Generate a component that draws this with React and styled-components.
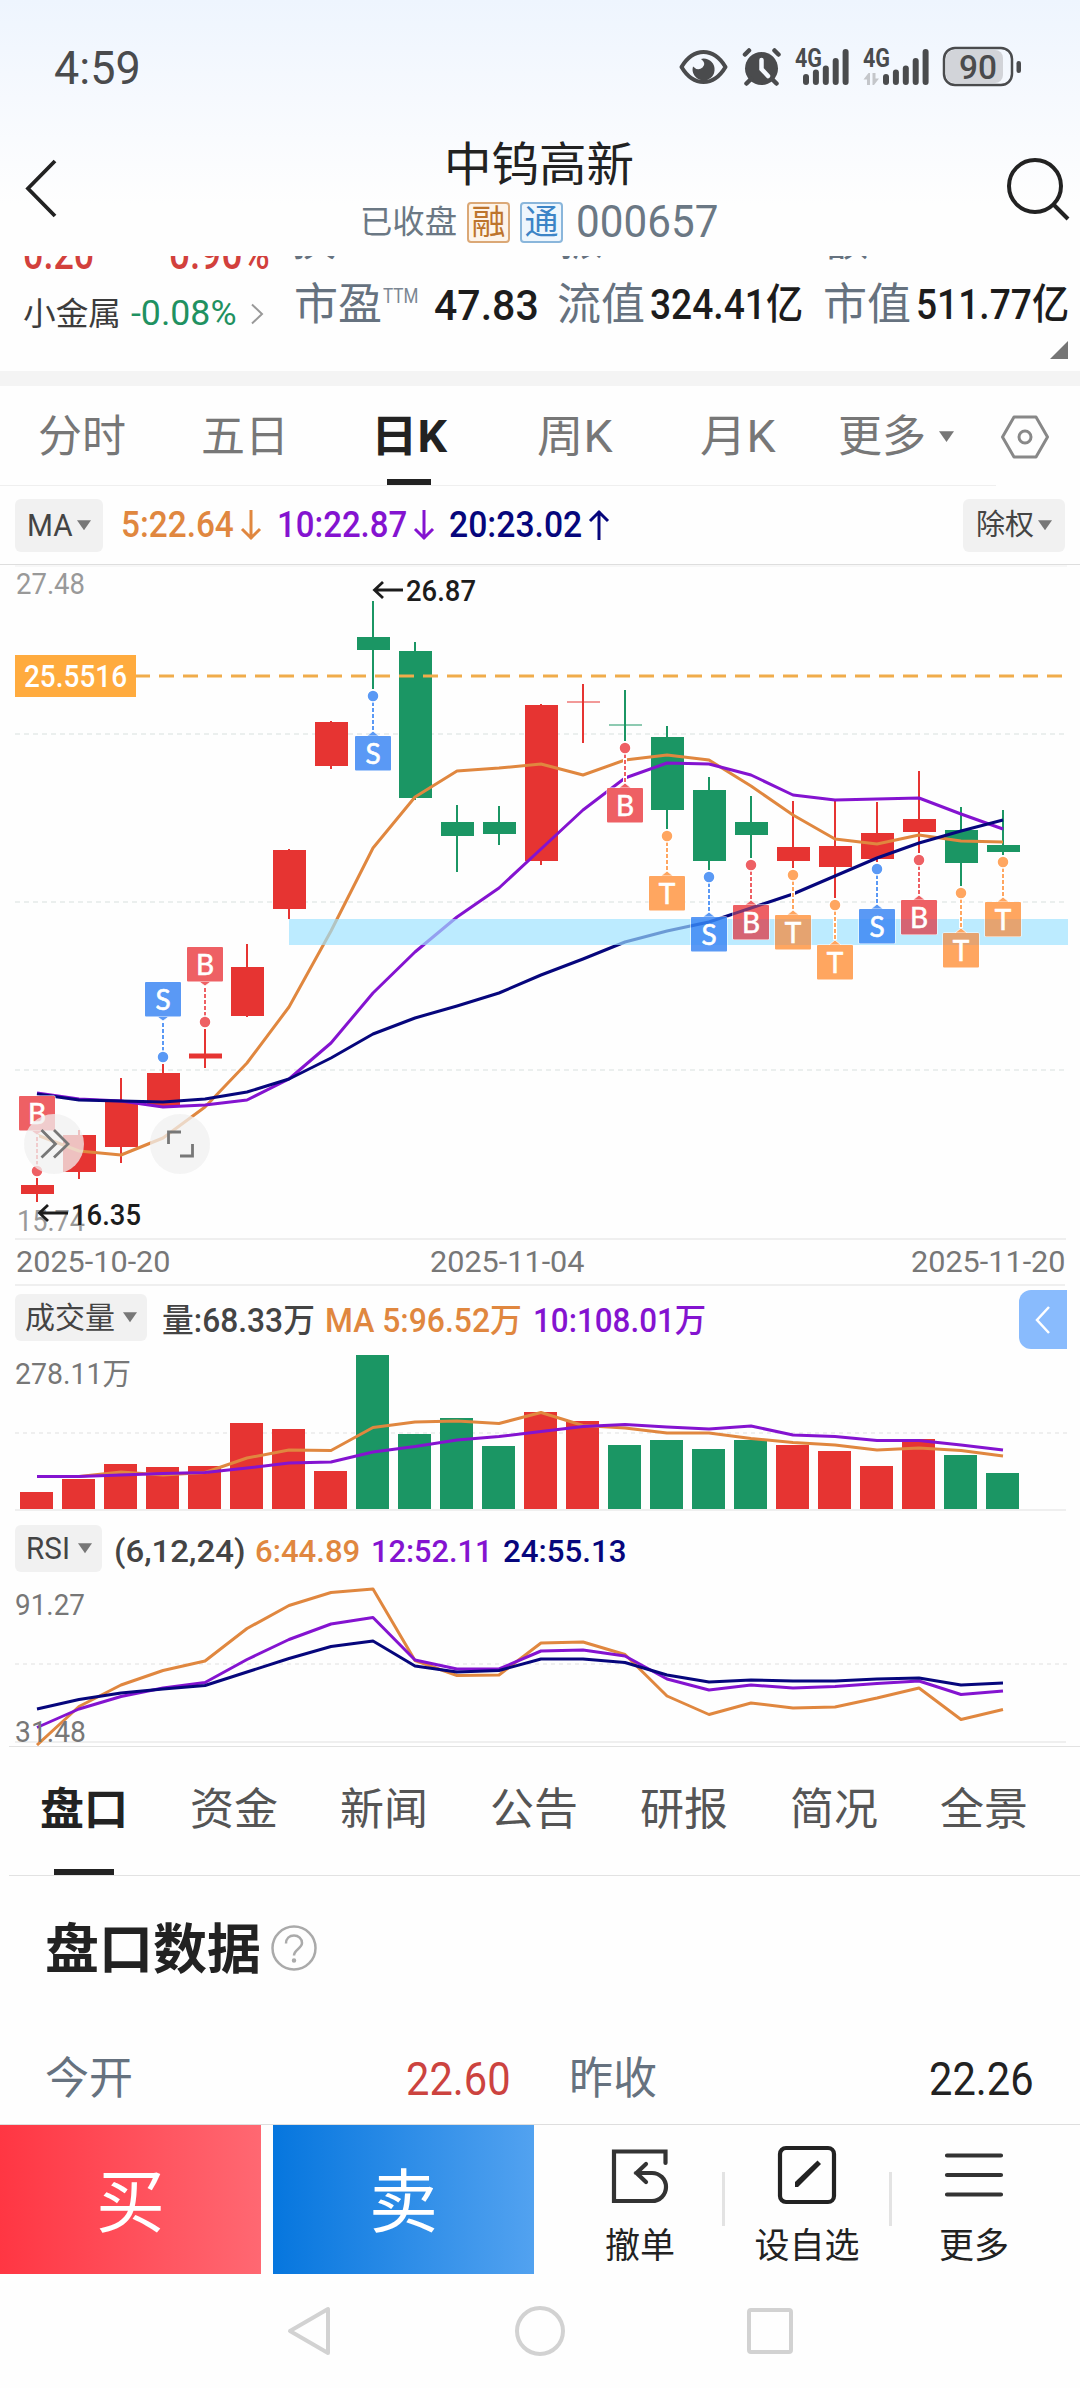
import { useLayoutEffect, useRef, useState } from "react";
import styled, { createGlobalStyle } from "styled-components";

const RED = "#e63432";
const GREEN = "#1b9664";
const ORANGE = "#e0873f";
const PURPLE = "#8413d0";
const NAVY = "#06067c";
const FONT = `Roboto, "Noto Sans CJK SC", sans-serif`;

const TAG_COLORS = { B: "#ee6064", S: "#5a99f5", T: "#ffa660" };

// [up, high, top, bottom, low]
const candles = [
  [1, 1178, 1185, 1194, 1202],
  [1, 1130, 1135, 1172, 1179],
  [1, 1078, 1101, 1147, 1163],
  [1, 1064, 1073, 1106, 1106],
  [1, 1029, 1053.5, 1058.5, 1068],
  [1, 944, 967, 1016, 1017],
  [1, 849, 850, 909, 919],
  [1, 721, 722, 766, 769],
  [0, 601, 637, 650, 689],
  [0, 642, 651, 798, 800],
  [0, 805, 822, 836, 872],
  [0, 806, 822, 834, 845],
  [1, 704, 705, 861, 865],
  [1, 684, 702, 702, 743],
  [0, 690, 725, 725, 741],
  [0, 726, 737, 810, 829],
  [0, 777, 790, 861, 870],
  [0, 796, 822, 835, 858],
  [1, 801, 847, 861, 868],
  [1, 800, 846, 867, 898],
  [1, 802, 833, 859, 862],
  [1, 771, 819, 832, 853],
  [0, 807, 830, 863, 886],
  [0, 810, 845, 852, 855],
];

const ma5 = [1135, 1151, 1155, 1138, 1107, 1063, 1007, 931, 848, 797, 771, 768, 764, 775, 760, 755, 760, 786, 815, 839, 844, 835, 841, 842];
const ma10 = [1093, 1099, 1101, 1107, 1105, 1100, 1079, 1043, 993, 952, 917, 888, 849, 810, 778, 763, 764, 775, 795, 800, 799, 798, 814, 829];
const ma20 = [1094, 1100, 1101, 1102, 1099, 1092, 1079, 1058, 1034, 1018, 1006, 993, 975, 959, 942, 931, 922, 908, 894, 876, 858, 843, 831, 820];

// [index, letter, dot y, box top]
const tags = [
  [0, "B", 1171, 1096],
  [3, "S", 1057, 982],
  [4, "B", 1022, 947],
  [8, "S", 696, 736],
  [14, "B", 748, 788],
  [15, "T", 836, 876],
  [16, "S", 877, 917],
  [17, "B", 865, 905],
  [18, "T", 875, 915],
  [19, "T", 905, 945],
  [20, "S", 869, 909],
  [21, "B", 860, 900],
  [22, "T", 893, 933],
  [23, "T", 862, 902],
];

const volTop = [1492, 1479, 1464, 1467, 1466, 1423, 1429, 1471, 1355, 1434, 1418, 1446, 1412, 1421, 1445, 1440, 1449, 1440, 1445, 1451, 1466, 1439, 1455, 1473];
const volUp = [1, 1, 1, 1, 1, 1, 1, 1, 0, 0, 0, 0, 1, 1, 0, 0, 0, 0, 1, 1, 1, 1, 0, 0];
const volMa5 = [1476.5, 1476.5, 1472, 1475, 1472.5, 1458, 1450, 1450.5, 1427.5, 1422, 1421, 1423.5, 1412.5, 1425.5, 1428, 1433, 1433, 1438.5, 1442.5, 1445, 1450, 1448, 1450.5, 1456];
const volMa10 = [1476.5, 1476.5, 1475, 1473.5, 1472.5, 1468, 1463, 1462, 1452, 1446.5, 1440, 1436.5, 1431.5, 1426.5, 1424.5, 1427, 1429, 1426, 1435, 1436.5, 1440.5, 1440.5, 1445, 1450];

const rsi6 = [1745, 1706.5, 1685, 1670.5, 1661, 1628.5, 1605.5, 1592.5, 1589, 1660.5, 1675.5, 1675, 1643, 1642, 1654.5, 1696, 1714.5, 1703, 1708, 1707, 1698, 1688, 1719.5, 1709.5];
const rsi12 = [1727.5, 1709, 1696.5, 1688, 1682.5, 1659.5, 1639.5, 1624, 1617.5, 1660, 1669, 1669, 1651, 1650, 1656, 1679, 1690, 1685, 1688, 1686.5, 1683.5, 1681, 1694.5, 1691];
const rsi24 = [1709, 1699.5, 1693, 1689, 1685.5, 1672, 1658.5, 1646.5, 1641, 1666, 1672, 1670.5, 1659, 1659, 1662.5, 1675, 1682, 1680, 1681, 1681, 1679, 1678, 1685, 1683];

const cx = (i) => 37 + i * 42;
const points = (ys) => ys.map((y, i) => `${cx(i)},${y}`).join(" ");

// Squeezes a run of text into a given width, like the narrow DIN digits
function Fit({ w, children, ...rest }) {
  const ref = useRef(null);
  const [scale, setScale] = useState(1);

  useLayoutEffect(() => {
    setScale(w / ref.current.offsetWidth);
  }, [w]);

  return (
    <FitBox $w={w} {...rest}>
      <FitText ref={ref} style={{ transform: `scaleX(${scale})` }}>{children}</FitText>
    </FitBox>
  );
}

function Caret({ size = 14 }) {
  return (
    <svg width={size} height={size * 0.75} viewBox="0 0 14 10">
      <path d="M0 0h14L7 10z" fill="#777" />
    </svg>
  );
}

function TrendArrow({ color, up }) {
  return (
    <svg width="22" height="32" viewBox="0 0 22 32" fill="none" stroke={color} strokeWidth="3">
      {up ? <path d="M11 31V2M2 12l9-9 9 9" /> : <path d="M11 1v29M2 20l9 9 9-9" />}
    </svg>
  );
}

function Label({ x, y, w, color = "#999", weight = 400, size = 30, children }) {
  return (
    <text x={x} y={y} textLength={w} lengthAdjust="spacingAndGlyphs" fontFamily={FONT} fontSize={size} fontWeight={weight} fill={color}>
      {children}
    </text>
  );
}

function Line({ ys, color, ...rest }) {
  return <polyline points={points(ys)} fill="none" stroke={color} strokeWidth="3" strokeLinejoin="round" {...rest} />;
}

function Tag({ i, letter, dot, top }) {
  const x = cx(i);
  const color = TAG_COLORS[letter];
  const below = top > dot;
  const tip = below ? top - 5 : top + 39;
  const edge = below ? top : top + 34.5;
  const shadeTop = Math.max(top, 919);
  const shadeBottom = Math.min(top + 34.5, 945);
  return (
    <g>
      <line x1={x} x2={x} y1={dot} y2={tip} stroke="#fff" strokeWidth="4" />
      <line x1={x} x2={x} y1={dot} y2={tip} stroke={color} strokeWidth="2" strokeDasharray="4 2" />
      <circle cx={x} cy={dot} r="6" fill={color} stroke="#fff" strokeWidth="1.5" />
      <rect x={x - 18.5} y={top - 0.5} width="37" height="35.5" rx="1.5" fill="#fff" />
      <path d={`M${x - 6} ${edge}L${x} ${tip}L${x + 6} ${edge}z`} fill={color} stroke="#fff" strokeWidth=".8" />
      <rect x={x - 18} y={top} width="36" height="34.5" rx="1" fill={color} />
      {i > 6 && shadeBottom > shadeTop && (
        <rect x={x - 18} y={shadeTop} width="36" height={shadeBottom - shadeTop} fill="#008cff" opacity=".1" />
      )}
      {(i === 16 || i === 17) && <Line ys={ma20} color={letter === "S" ? "#0a50d0" : NAVY} opacity=".5" clipPath={`url(#tag${i})`} />}
      <text x={x} y={top + 27.5} textAnchor="middle" fontFamily="Lato, sans-serif" fontSize="28" fill="#fff" stroke="#fff" strokeWidth=".6">
        {letter}
      </text>
    </g>
  );
}

function StatusIcons() {
  const heights = [11, 15.5, 19.5, 27, 36];
  return (
    <svg width="346" height="44" viewBox="678 45 346 44">
      <path d="M681.500 67q9-15 22-15t22 15q-9 15-22 15t-22-15z" fill="none" stroke="#4a4b4d" strokeWidth="4" strokeLinejoin="round" />
      <path d="M703.500 58.500a11 11 0 1 1-10.500 8q5 5 9.500 1t-1.500-8.500z" fill="#4a4b4d" />
      <circle cx="761.500" cy="68.500" r="16.500" fill="#4a4b4d" />
      <path d="M745 54.500l4-4M778.500 54.500l-4-4M751 79l-4.500 4.500M772 79l4.500 4.500" stroke="#4a4b4d" strokeWidth="4.500" strokeLinecap="round" />
      <path d="M761.500 60v9l6.500 7" fill="none" stroke="#f4f8fe" strokeWidth="4.500" strokeLinecap="round" />
      {[803, 883].map((x) => (
        <g key={x} fill="#4a4b4d">
          {heights.map((h, k) => (
            <rect key={k} x={x + k * 9.9} y={85 - h} width="6" height={h} rx="3" />
          ))}
        </g>
      ))}
      <Label x={795} y={66.500} w={27} size={25} weight={700} color="#4a4b4d">4G</Label>
      <Label x={863} y={66.500} w={27} size={25} weight={700} color="#4a4b4d">4G</Label>
      <path d="M863.500 79.500l5-6.500h1.500v12h-3v-5.500zM879 78.500l-5 6.500h-1.500v-12h3v5.500z" fill="#c4c6ca" />
      <rect x="946" y="50" width="57" height="33" rx="8" fill="#d2d4d9" />
      <rect x="944" y="48" width="68" height="37" rx="11" fill="none" stroke="#4a4b4d" strokeWidth="2.500" />
      <rect x="1016.500" y="61" width="4.500" height="12" rx="2.200" fill="#4a4b4d" />
      <Label x={959} y={79} w={38} size={34} weight={500} color="#4a4b4d">90</Label>
    </svg>
  );
}

function PriceChart() {
  return (
    <Plot height="675" viewBox="0 565 1080 675">
      <defs>
        <clipPath id="tag16"><rect x={cx(16) - 18} y="917" width="36" height="34" /></clipPath>
        <clipPath id="tag17"><rect x={cx(17) - 18} y="905" width="36" height="34" /></clipPath>
      </defs>
      {[734, 902, 1070].map((y) => (
        <line key={y} x1="15" x2="1067" y1={y} y2={y} stroke="#ebefee" strokeWidth="2" strokeDasharray="5 4" />
      ))}
      <line x1="15" x2="1067" y1="566" y2="566" stroke="#f0f0f0" />
      <Label x={16} y={594} w={69}>27.48</Label>
      <Label x={17} y={1231} w={68}>15.74</Label>

      {candles.map(([up, high, top, bottom, low], i) => {
        const color = up ? RED : GREEN;
        return (
          <g key={i} fill={color}>
            <rect x={cx(i) - 1} y={high} width="2" height={low - high} />
            {bottom > top ? (
              <rect x={cx(i) - 16} y={top} width="33" height={bottom - top} />
            ) : (
              <rect x={cx(i) - 16} y={top - 1} width="33" height="2" opacity=".5" />
            )}
          </g>
        );
      })}

      <line x1="135" x2="1067" y1="676" y2="676" stroke="#f0ac4b" strokeWidth="3" strokeDasharray="15 9" />
      <rect x="15" y="655" width="121" height="42" fill="#ffab3e" />
      <Label x={24} y={687} w={103} size={31} weight={500} color="#fff">25.5516</Label>

      <Line ys={ma5} color={ORANGE} />
      <Line ys={ma10} color={PURPLE} />
      <Line ys={ma20} color={NAVY} />
      <rect x="289" y="919" width="779" height="26" fill="#9ce2ff" opacity=".68" />

      {tags.map(([i, letter, dot, top]) => (
        <Tag key={i} i={i} letter={letter} dot={dot} top={top} />
      ))}

      <path d="M403 590h-28M383 582l-8.500 8 8.500 8" fill="none" stroke="#1c1c1c" strokeWidth="2.800" />
      <Label x={406} y={601} w={70} weight={500} color="#1c1c1c">26.87</Label>
      <path d="M68 1213H40M48 1205l-8.500 8 8.500 8" fill="none" stroke="#1c1c1c" strokeWidth="2.800" />
      <Label x={71} y={1225} w={70} weight={500} color="#1c1c1c">16.35</Label>

      <g fill="none" stroke="#777" strokeWidth="2.800">
        <circle cx="54" cy="1144" r="30" fill="#f0f0f0" fillOpacity=".75" stroke="none" />
        <path d="M41.500 1130l14 14-14 13.500M54 1130l14 14-14 13.500" />
        <circle cx="180" cy="1144" r="30" fill="#f0f0f0" fillOpacity=".75" stroke="none" />
        <path d="M168.500 1144v-12H181M192.500 1144v12H180" />
      </g>
      <line x1="15" x2="1066" y1="1239" y2="1239" stroke="#efefef" strokeWidth="2" />
    </Plot>
  );
}

function VolumeChart() {
  return (
    <Plot height="162" viewBox="0 1350 1080 162">
      <line x1="15" x2="1067" y1="1433" y2="1433" stroke="#efefef" strokeWidth="2" strokeDasharray="4 4" />
      <line x1="15" x2="1066" y1="1510" y2="1510" stroke="#efefef" strokeWidth="2" />
      <Label x={15} y={1384} w={116} color="#777">278.11万</Label>
      {volTop.map((y, i) => (
        <rect key={i} x={cx(i) - 17} y={y} width="33" height={1509 - y} fill={volUp[i] ? RED : GREEN} />
      ))}
      <Line ys={volMa5} color={ORANGE} />
      <Line ys={volMa10} color={PURPLE} />
    </Plot>
  );
}

function RsiChart() {
  return (
    <Plot height="166" viewBox="0 1580 1080 166">
      <line x1="15" x2="1067" y1="1664" y2="1664" stroke="#efefef" strokeWidth="2" strokeDasharray="4 4" />
      <line x1="15" x2="1066" y1="1742" y2="1742" stroke="#efefef" strokeWidth="2" />
      <Line ys={rsi6} color={ORANGE} />
      <Line ys={rsi12} color={PURPLE} />
      <Line ys={rsi24} color={NAVY} />
      <Label x={15} y={1615} w={70} color="#777">91.27</Label>
      <Label x={15} y={1742} w={71} color="#777">31.48</Label>
    </Plot>
  );
}

const newsTabs = ["盘口", "资金", "新闻", "公告", "研报", "简况", "全景"];

function App() {
  return (
    <Page>
      <GlobalStyle />
      <Header>
        <StatusBar>
          <Fit w={87} $size={47} $color="#4a4b4d">4:59</Fit>
          <StatusIcons />
        </StatusBar>
        <NavRow>
          <svg width="34" height="60" viewBox="0 0 34 60" fill="none" stroke="#222" strokeWidth="3.800">
            <path d="M31 3L4 30.500 31 58" />
          </svg>
          <TitleBlock>
            <Fit w={190} $size={47} $color="#222">中钨高新</Fit>
            <SubTitle>
              <Fit w={97} $size={32} $color="#6b7884">已收盘</Fit>
              <Badge $border="#dba876" $bg="#fdf4ea" $color="#bd742c">融</Badge>
              <Badge $border="#8ab6db" $bg="#eef6fd" $color="#3c84c6">通</Badge>
              <Code><Fit w={142} $size={44} $color="#6b7884">000657</Fit></Code>
            </SubTitle>
          </TitleBlock>
          <svg width="64" height="64" viewBox="0 0 64 64" fill="none" stroke="#222" strokeWidth="4">
            <circle cx="29" cy="28" r="26" />
            <path d="M48 47l14 14" />
          </svg>
        </NavRow>
      </Header>

      <Stats>
        <ClippedRow>
          <Fit w={71} $size={44} $weight={500} $color="#d2403c">0.20</Fit>
          <Fit w={101} $ml={75} $size={44} $weight={500} $color="#d2403c">0.90%</Fit>
          <ClippedLabel $ml={22}>换</ClippedLabel>
          <ClippedLabel $ml={223}>振</ClippedLabel>
          <ClippedLabel $ml={221}>额</ClippedLabel>
        </ClippedRow>
        <StatsRow>
          <Sector>
            <Fit w={98} $size={32} $color="#3c3c3c">小金属</Fit>
            <Fit w={106} $ml={10} $size={35} $color="#1f9161">-0.08%</Fit>
            <svg width="16" height="24" viewBox="0 0 16 24" fill="none" stroke="#999" strokeWidth="2">
              <path d="M3 2.500l10 9.500L3 21.500" />
            </svg>
          </Sector>
          <Fit w={88} $size={44} $color="#66727f">市盈</Fit>
          <Sup><Fit w={35} $size={20} $color="#7b8692">TTM</Fit></Sup>
          <Fit w={105} $ml={16} $size={43} $weight={500} $color="#1c1c1c">47.83</Fit>
          <Fit w={88} $ml={18} $size={44} $color="#66727f">流值</Fit>
          <Fit w={153} $ml={5} $size={42} $weight={500} $color="#1c1c1c">324.41亿</Fit>
          <Fit w={88} $ml={20} $size={44} $color="#66727f">市值</Fit>
          <Fit w={153} $ml={5} $size={42} $weight={500} $color="#1c1c1c">511.77亿</Fit>
        </StatsRow>
        <Corner />
      </Stats>
      <Band />

      <PeriodTabs>
        <Fit w={88} $size={44} $color="#777">分时</Fit>
        <Fit w={88} $ml={75} $size={44} $color="#777">五日</Fit>
        <ActivePeriod>
          <Fit w={76} $size={44} $weight={700} $color="#222">日K</Fit>
        </ActivePeriod>
        <Fit w={76} $ml={90} $size={44} $color="#777">周K</Fit>
        <Fit w={76} $ml={87} $size={44} $color="#777">月K</Fit>
        <Fit w={88} $ml={62} $size={44} $color="#777">更多</Fit>
        <PeriodCaret><Caret size={15} /></PeriodCaret>
        <svg width="48" height="44" viewBox="0 0 48 44" fill="none" stroke="#888" strokeWidth="3">
          <path d="M13 2h22l11.500 20L35 42H13L1.500 22z" strokeLinejoin="round" />
          <circle cx="24" cy="22" r="6" />
        </svg>
      </PeriodTabs>

      <MaRow>
        <Pill $w={88} $h={53}>
          <Fit w={46} $size={31} $color="#444">MA</Fit>
          <Caret />
        </Pill>
        <Fit w={113} $ml={18} $size={36} $weight={500} $color={ORANGE}>5:22.64</Fit>
        <ArrowCell><TrendArrow color={ORANGE} /></ArrowCell>
        <Fit w={130} $ml={15} $size={36} $weight={500} $color={PURPLE}>10:22.87</Fit>
        <ArrowCell><TrendArrow color={PURPLE} /></ArrowCell>
        <Fit w={133} $ml={14} $size={36} $weight={500} $color={NAVY}>20:23.02</Fit>
        <ArrowCell><TrendArrow color={NAVY} up /></ArrowCell>
        <PillEnd>
          <Pill $w={102} $h={53}>
            <Fit w={58} $size={29} $color="#444">除权</Fit>
            <Caret />
          </Pill>
        </PillEnd>
      </MaRow>

      <PriceChart />
      <Dates>
        <Fit w={154} $size={30} $color="#777">2025-10-20</Fit>
        <Fit w={154} $ml={260} $size={30} $color="#777">2025-11-04</Fit>
        <Fit w={154} $ml={327} $size={30} $color="#777">2025-11-20</Fit>
      </Dates>

      <VolumeRow>
        <Pill $w={132} $h={47} $gap={8}>
          <Fit w={90} $size={30} $color="#444">成交量</Fit>
          <Caret />
        </Pill>
        <Fit w={153} $ml={15} $size={33} $weight={500} $color="#444">量:68.33万</Fit>
        <Fit w={197} $ml={10} $size={33} $weight={500} $color={ORANGE}>MA 5:96.52万</Fit>
        <Fit w={173} $ml={11} $size={33} $weight={500} $color={PURPLE}>10:108.01万</Fit>
        <SideButton>
          <svg width="16" height="30" viewBox="0 0 16 30" fill="none" stroke="#fff" strokeWidth="2.500">
            <path d="M14 2L2 15l12 13" />
          </svg>
        </SideButton>
      </VolumeRow>
      <VolumeChart />

      <RsiRow>
        <Pill $w={87} $h={47} $gap={8}>
          <Fit w={44} $size={31} $color="#444">RSI</Fit>
          <Caret />
        </Pill>
        <Fit w={132} $ml={12} $size={32} $weight={500} $color="#444">(6,12,24)</Fit>
        <Fit w={105} $ml={9} $size={32} $weight={500} $color={ORANGE}>6:44.89</Fit>
        <Fit w={121} $ml={11} $size={32} $weight={500} $color={PURPLE}>12:52.11</Fit>
        <Fit w={123} $ml={11} $size={32} $weight={500} $color={NAVY}>24:55.13</Fit>
      </RsiRow>
      <RsiChart />

      <NewsTabs>
        {newsTabs.map((name, i) => (
          <NewsTab key={name} $active={i === 0}>{name}</NewsTab>
        ))}
      </NewsTabs>

      <Heading>
        <HeadingText>盘口数据</HeadingText>
        <svg width="46" height="46" viewBox="0 0 46 46" fill="none" stroke="#aaa" strokeWidth="2.500">
          <circle cx="23" cy="23" r="21.500" />
          <path d="M15 18.500c0-5 3.500-8 8-8s8 3 8 7.500c0 5.500-8 6.500-8 12.500" />
          <circle cx="23" cy="35.500" r="1" fill="#aaa" />
        </svg>
      </Heading>

      <DataRow>
        <Fit w={88} $size={44} $color="#66727f">今开</Fit>
        <Fit w={105} $ml={273} $size={46} $color="#cc433f">22.60</Fit>
        <Fit w={88} $ml={58} $size={44} $color="#66727f">昨收</Fit>
        <Fit w={105} $ml={272} $size={46} $color="#222">22.26</Fit>
      </DataRow>

      <ActionBar>
        <TradeButton $from="#ff3643" $to="#ff6872">买</TradeButton>
        <TradeButton $from="#0676de" $to="#52a2f0">卖</TradeButton>
        <Tools>
          <Tool>
            <svg width="60" height="60" viewBox="0 0 60 60" fill="none" stroke="#333" strokeWidth="4.200" strokeLinecap="round">
              <path d="M55.500 18V6.500H4V56h38a13.500 13.500 0 0 0 0-28H26M36 19l-9.500 9 9.500 9" />
            </svg>
            撤单
          </Tool>
          <Divider />
          <Tool>
            <svg width="60" height="60" viewBox="0 0 60 60" fill="none" stroke="#222" strokeWidth="4.200">
              <rect x="3" y="3" width="54" height="54" rx="6" />
              <path d="M18 42v-5l22.500-21.500 3.500 3.500L21 42z" fill="#222" stroke="none" />
            </svg>
            设自选
          </Tool>
          <Divider />
          <Tool>
            <svg width="60" height="60" viewBox="0 0 60 60" fill="none" stroke="#333" strokeWidth="4.200" strokeLinecap="round">
              <path d="M3 10.500h54M3 30h54M3 49.500h54" />
            </svg>
            更多
          </Tool>
        </Tools>
      </ActionBar>

      <SystemNav>
        <svg width="48" height="54" viewBox="0 0 48 54"><path d="M43 5v44L5 27z" /></svg>
        <svg width="54" height="54" viewBox="0 0 54 54"><circle cx="27" cy="27" r="23" /></svg>
        <svg width="48" height="54" viewBox="0 0 48 54"><rect x="2" y="6" width="42" height="42" rx="2" /></svg>
      </SystemNav>
    </Page>
  );
}

const GlobalStyle = createGlobalStyle`
  * {
    box-sizing: border-box;
  }
  body {
    margin: 0;
    background: #fefefe;
  }
  svg {
    display: block;
    flex-shrink: 0;
  }
`;

const Page = styled.div`
  width: 1080px;
  height: 2388px;
  overflow: hidden;
  font-family: ${FONT};
  line-height: 1;
  color: #222;
`;

const FitBox = styled.span`
  display: block;
  flex-shrink: 0;
  width: ${(p) => p.$w}px;
  height: 1em;
  margin-left: ${(p) => p.$ml || 0}px;
  font-size: ${(p) => p.$size}px;
  font-weight: ${(p) => p.$weight || 400};
  color: ${(p) => p.$color};
  line-height: 1;
`;

const FitText = styled.span`
  display: inline-block;
  white-space: nowrap;
  transform-origin: left center;
`;

const Header = styled.header`
  height: 256px;
  background: linear-gradient(#eef5fe, #f6f9fe 38%, #fefefe 80%);
`;

const StatusBar = styled.div`
  display: flex;
  align-items: center;
  justify-content: space-between;
  height: 134px;
  padding: 0 56px 0 54px;
`;

const NavRow = styled.div`
  display: flex;
  align-items: flex-start;
  justify-content: space-between;
  padding: 0 10px 0 24px;

  > svg {
    margin-top: 24px;
  }
`;

const TitleBlock = styled.div`
  display: flex;
  flex-direction: column;
  align-items: center;
  gap: 11px;
  margin-top: 7px;
  padding-left: 14px;
`;

const SubTitle = styled.div`
  display: flex;
  align-items: center;
  height: 46px;
`;

const Badge = styled.span`
  display: flex;
  align-items: center;
  justify-content: center;
  width: 43px;
  height: 41px;
  margin-left: 10px;
  border: 2px solid ${(p) => p.$border};
  border-radius: 4px;
  background: ${(p) => p.$bg};
  color: ${(p) => p.$color};
  font-size: 34px;
`;

const Code = styled.span`
  margin-left: 13px;
`;

const Stats = styled.section`
  height: 115px;
  overflow: hidden;
  padding-left: 23px;
`;

const ClippedRow = styled.div`
  display: flex;
  align-items: flex-end;
  height: 20px;
`;

const ClippedLabel = styled.span`
  width: 44px;
  margin: 0 0 13px ${(p) => p.$ml}px;
  font-size: 44px;
  color: #66727f;
`;

const StatsRow = styled.div`
  display: flex;
  align-items: center;
  height: 58px;
`;

const Sector = styled.div`
  display: flex;
  align-items: center;
  width: 271px;
  padding-top: 17px;

  svg {
    margin-left: 12px;
  }
`;

const Sup = styled.span`
  align-self: flex-start;
  margin: 10px 0 0 1px;
`;

const Corner = styled.div`
  width: 18px;
  height: 18px;
  margin: 7px 12px 0 auto;
  background: #757575;
  clip-path: polygon(100% 0, 100% 100%, 0 100%);
`;

const Band = styled.div`
  height: 15px;
  background: #f4f4f4;
`;

const PeriodTabs = styled.nav`
  display: flex;
  align-items: center;
  height: 100px;
  padding: 2px 0 0 38px;
  background: linear-gradient(#efefef, #efefef) left bottom / 996px 1px no-repeat;
`;

const ActivePeriod = styled.div`
  display: flex;
  align-items: center;
  justify-content: center;
  align-self: stretch;
  width: 76px;
  margin: 0 0 1px 82px;
  background: linear-gradient(#222, #222) center bottom / 44px 6px no-repeat;
`;

const PeriodCaret = styled.span`
  margin: 0 47px 0 13px;
`;

const MaRow = styled.div`
  display: flex;
  align-items: center;
  height: 79px;
  padding: 0 15px;
  border-bottom: 1px solid #dedede;
`;

const Pill = styled.div`
  display: flex;
  align-items: center;
  justify-content: center;
  flex-shrink: 0;
  gap: ${(p) => p.$gap || 4}px;
  width: ${(p) => p.$w}px;
  height: ${(p) => p.$h}px;
  border-radius: 6px;
  background: #f1f1f1;
`;

const PillEnd = styled.div`
  margin-left: auto;
`;

const ArrowCell = styled.span`
  margin-left: 6px;
`;

const Plot = styled.svg`
  width: 1080px;
`;

const Dates = styled.div`
  display: flex;
  align-items: center;
  height: 46px;
  margin: 0 15px;
  padding-left: 1px;
  border-bottom: 2px solid #efefef;
`;

const VolumeRow = styled.div`
  display: flex;
  align-items: flex-start;
  height: 64px;
  padding: 8px 13px 0 15px;

  > span {
    margin-top: 10px;
  }
`;

const SideButton = styled.button`
  display: flex;
  align-items: center;
  justify-content: center;
  width: 48px;
  height: 59px;
  margin: -4px 0 0 auto;
  padding: 0;
  border: 0;
  border-radius: 12px 0 0 12px;
  background: #89bbfd;
`;

const RsiRow = styled.div`
  display: flex;
  align-items: flex-start;
  height: 68px;
  padding: 13px 15px 0;

  > span {
    margin-top: 10px;
  }
`;

const NewsTabs = styled.nav`
  display: flex;
  justify-content: space-between;
  height: 130px;
  margin-left: 9px;
  padding: 0 52px 0 31px;
  border-top: 1px solid #e2e2e2;
  border-bottom: 1px solid #e2e2e2;
`;

const NewsTab = styled.div`
  display: flex;
  align-items: center;
  width: 88px;
  font-size: 44px;
  padding-bottom: 3px;
  font-weight: ${(p) => (p.$active ? 700 : 400)};
  color: ${(p) => (p.$active ? "#222" : "#555")};
  background: ${(p) => (p.$active ? "linear-gradient(#222, #222) center bottom / 60px 6px no-repeat" : "none")};
`;

const Heading = styled.h2`
  display: flex;
  align-items: center;
  gap: 10px;
  height: 143px;
  margin: 0;
  padding: 0 0 0 45px;
  font-size: 54px;
  font-weight: 700;
`;

const HeadingText = styled.span`
  padding-top: 7px;
`;

const DataRow = styled.div`
  display: flex;
  align-items: center;
  height: 105px;
  padding: 14px 0 0 45px;
`;

const ActionBar = styled.div`
  display: flex;
  gap: 12px;
  height: 150px;
  border-top: 1px solid #dedede;
`;

const TradeButton = styled.button`
  width: 261px;
  padding: 0 0 5px;
  border: 0;
  background: linear-gradient(90deg, ${(p) => p.$from}, ${(p) => p.$to});
  color: #fff;
  font-family: inherit;
  font-size: 69px;
`;

const Tools = styled.div`
  display: flex;
  align-items: flex-start;
  padding-left: 12px;
`;

const Tool = styled.div`
  display: flex;
  flex-direction: column;
  align-items: center;
  gap: 24px;
  width: 164px;
  padding-top: 20px;
  font-size: 35px;
`;

const Divider = styled.div`
  width: 3px;
  height: 54px;
  margin-top: 47px;
  background: #e3e3e3;
`;

const SystemNav = styled.div`
  display: flex;
  align-items: center;
  justify-content: center;
  gap: 180px;
  height: 114px;

  svg {
    fill: none;
    stroke: #d2d2d2;
    stroke-width: 4;
    stroke-linejoin: round;
  }
`;

export default App;
